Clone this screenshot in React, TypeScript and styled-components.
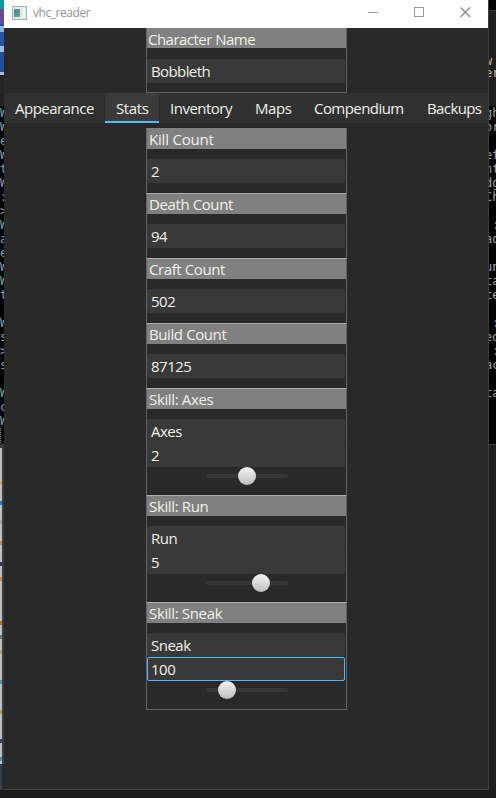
import React from "react";
import styled, { createGlobalStyle } from "styled-components";

const Global = createGlobalStyle`
  * { box-sizing: border-box; }
  html, body { margin: 0; background: #1b1b1b; overflow: hidden; }
`;

const Desktop = styled.div`
  width: 496px;
  height: 798px;
  display: grid;
  grid-template-columns: 4px 485px 7px;
  grid-template-rows: 790px 8px;
  overflow: hidden;
  font-family: "Open Sans", "Noto Sans", sans-serif;
  font-size: 15px;
  color: #f0f0ea;
`;

const Strip = styled.div`
  min-width: 0;
  overflow: hidden;
  display: flex;
  flex-direction: column;
`;

const Segment = styled.div<{ $h: number; $bg: string }>`
  flex: none;
  height: ${(p) => p.$h}px;
  background: ${(p) => p.$bg};
`;

const Terminal = styled.div<{ $h: number; $tint: string }>`
  flex: none;
  height: ${(p) => p.$h}px;
  overflow: hidden;
  background: #000;
  color: ${(p) => p.$tint};
  font: 12px/14px "DejaVu Sans Mono", monospace;
  white-space: pre;
`;

const Lines = styled.div<{ $shift: number }>`
  margin-left: ${(p) => p.$shift}px;
`;

const Editor = styled.div`
  flex: none;
  height: 96px;
  padding-top: 44px;
  overflow: hidden;
  background: #1f1f1f;
  border-top: 1px solid #353535;
  color: #c4b8a4;
  font: 12px/12px "DejaVu Sans Mono", monospace;
  white-space: pre;
`;

const Window = styled.div`
  display: flex;
  flex-direction: column;
  background: #292929;
  border-right: 1px solid #3c3c3c;
  border-bottom: 1px solid #404040;
  min-width: 0;
`;

const TitleBar = styled.div`
  height: 28px;
  flex: none;
  display: flex;
  align-items: center;
  background: #fff;
  color: #929292;
  font-size: 12px;
`;

const AppIcon = styled.svg`
  width: 15px;
  height: 14px;
  margin: 0 6px 3px 8px;
`;

const Title = styled.span`
  flex: 1;
  line-height: 20px;
  padding-bottom: 2px;
  letter-spacing: -0.45px;
`;

const WindowButton = styled.div`
  width: 46px;
  height: 28px;
  display: flex;
  justify-content: center;
  padding-top: 7px;
`;

const Panel = styled.section`
  width: 201px;
  margin-left: 142px;
  flex: none;
`;

const Group = styled.div<{ $h: number; $first?: boolean; $last?: boolean }>`
  height: ${(p) => p.$h}px;
  border: 1px solid #636363;
  border-top-color: ${(p) => (p.$first ? "#838383" : "#adadad")};
  border-bottom: ${(p) => (p.$last ? "1px solid #636363" : "0")};
`;

const GroupTitle = styled.div<{ $short?: boolean }>`
  height: ${(p) => (p.$short ? 19 : 20)}px;
  line-height: 21px;
  margin-bottom: ${(p) => (p.$short ? 11 : 10)}px;
  padding-left: ${(p) => (p.$short ? 1 : 2)}px;
  background: #808080;
`;

const Field = styled.div<{ $focus?: boolean }>`
  height: 24px;
  line-height: ${(p) => (p.$focus ? 23 : 25)}px;
  margin-right: 1px;
  padding-left: ${(p) => (p.$focus ? 3 : 4)}px;
  background: #393939;
  border-radius: 2px;
  ${(p) => p.$focus && "border: 1px solid #54b8f5;"}
`;

const Track = styled.div`
  position: relative;
  width: 82px;
  height: 4px;
  margin: 7px 0 0 59px;
  border-radius: 2px;
  background: #373737;
`;

const Thumb = styled.div<{ $at: number }>`
  position: absolute;
  top: -7px;
  left: ${(p) => p.$at - 9}px;
  width: 18px;
  height: 18px;
  border-radius: 50%;
  background: linear-gradient(#f4f4f4, #bdbdbd);
`;

const Tabs = styled.nav`
  height: 30px;
  flex: none;
  display: flex;
  background: #313131;
  margin-bottom: 5px;
`;

const Tab = styled.div<{ $w: number; $active?: boolean }>`
  flex: none;
  width: ${(p) => p.$w}px;
  padding-left: 11px;
  line-height: 30px;
  height: 30px;
  white-space: nowrap;
  background: ${(p) => (p.$active ? "#3b3b3b" : "transparent")};
  border-bottom: ${(p) => (p.$active ? "2px solid #57bbfb" : "0")};
`;

const Label = styled.span<{ $ls: number }>`
  letter-spacing: ${(p) => p.$ls}px;
`;

const tabs = [
  { name: "Appearance", w: 101, ls: -0.5 },
  { name: "Stats", w: 54, ls: -0.4 },
  { name: "Inventory", w: 85, ls: -0.5 },
  { name: "Maps", w: 59, ls: -0.4 },
  { name: "Compendium", w: 113, ls: -0.56 },
  { name: "Backups", w: 72, ls: -0.6 },
];

const counts = [
  { name: "Kill Count", value: "2", ls: -0.2 },
  { name: "Death Count", value: "94", ls: -0.4 },
  { name: "Craft Count", value: "502", ls: -0.4 },
  { name: "Build Count", value: "87125", ls: -0.4 },
];

const skills = [
  { name: "Axes", value: "2", at: 41 },
  { name: "Run", value: "5", at: 55 },
  { name: "Sneak", value: "100", at: 20.5, focus: true },
];

const leftLines = "W\nW\ne\nW\nt\nW\n:\n>\nW\na\ne\nW\nW\nt\n\nW\ns\n>\ns\n\nW\nc\nW";
const rightLines =
  "gh\nor\n\net\nnt\ndg\nCh\n\n :\nad\n\nun\nta\nte\n\n :\ned\n :\nac\n\nta";

const speckles = [
  [33, "#caa77c"], [53, "#2d7fc4"], [72, "#b8a678"], [93, "#c98f5a"],
  [114, "#3b2d50"], [129, "#c78a5c"], [173, "#b8701f"], [187, "#6d7478"],
  [202, "#b99c80"], [232, "#4a90c8"], [262, "#b39468"], [291, "#3a3e6b"],
  [309, "#4a8fc0"],
] as const;

const documentEdge = `${speckles
  .map(([y, c]) => `linear-gradient(${c}, ${c}) 0 ${y}px / 2px 4px no-repeat`)
  .join(", ")}, linear-gradient(90deg, #bfc2c3 0 2px, #3a3d3e 2px)`;

export default function App() {
  return (
    <>
      <Global />
      <Desktop>
        <Strip>
          <Segment $h={9} $bg="#0d9aa3" />
          <Segment $h={15} $bg="#684a92" />
          <Segment $h={2} $bg="#24509f" />
          <Segment $h={6} $bg="#8fb4dc" />
          <Segment $h={14} $bg="#2456a8" />
          <Segment $h={6} $bg="#9dbde0" />
          <Segment $h={20} $bg="#22509f" />
          <Segment $h={3} $bg="#b0bac8" />
          <Segment $h={31} $bg="#232426" />
          <Terminal $h={322} $tint="#8fa3b4">
            <Lines $shift={0}>{leftLines}</Lines>
          </Terminal>
          <Segment
            $h={16}
            $bg="repeating-linear-gradient(#999 0 1px, #000 1px 2px) 0 0 / 1px 100% no-repeat, #000"
          />
          <Segment $h={4} $bg="#3b3d40" />
          <Segment $h={316} $bg={documentEdge} />
          <Segment $h={26} $bg="linear-gradient(90deg, #38404a 0 2px, #26282b 2px)" />
        </Strip>
        <Window>
          <TitleBar>
            <AppIcon viewBox="0 0 15 14">
              <defs>
                <linearGradient id="pane" x1="0" y1="0" x2="1" y2="1">
                  <stop offset="0" stopColor="#4d80aa" />
                  <stop offset="1" stopColor="#68ad7c" />
                </linearGradient>
              </defs>
              <rect x=".5" y=".5" width="14" height="13" fill="#e9ecee" stroke="#a7adb4" />
              <rect x="2" y="3" width="6" height="8" fill="url(#pane)" />
              <rect x="9" y="3" width="2" height="8" fill="#dce5df" />
              <rect x="11" y="3" width="2" height="8" fill="#f8f8f8" />
            </AppIcon>
            <Title>vhc_reader</Title>
            <WindowButton>
              <svg width="10" height="11"><path d="M0 5.5H10" stroke="#999" /></svg>
            </WindowButton>
            <WindowButton>
              <svg width="10" height="11"><rect x=".5" y=".5" width="9" height="9" fill="none" stroke="#999" /></svg>
            </WindowButton>
            <WindowButton>
              <svg width="11" height="11"><path d="M.5 .5L10 10M10 .5L.5 10" stroke="#888" strokeWidth="1.2" /></svg>
            </WindowButton>
          </TitleBar>

          <Panel>
            <Group $h={65} $first $last>
              <GroupTitle $short><Label $ls={-0.52}>Character Name</Label></GroupTitle>
              <Field><Label $ls={-0.6}>Bobbleth</Label></Field>
            </Group>
          </Panel>

          <Tabs>
            {tabs.map((t, i) => (
              <Tab key={t.name} $w={t.w} $active={i === 1}>
                <Label $ls={t.ls}>{t.name}</Label>
              </Tab>
            ))}
          </Tabs>

          <Panel>
            {counts.map((c, i) => (
              <Group key={c.name} $h={65} $first={i === 0}>
                <GroupTitle><Label $ls={c.ls}>{c.name}</Label></GroupTitle>
                <Field><Label $ls={-0.5}>{c.value}</Label></Field>
              </Group>
            ))}
            {skills.map((s, i) => (
              <Group key={s.name} $h={i === 2 ? 108 : 107} $last={i === 2}>
                <GroupTitle><Label $ls={-0.35}>{`Skill: ${s.name}`}</Label></GroupTitle>
                <Field><Label $ls={-0.5}>{s.name}</Label></Field>
                <Field $focus={s.focus}><Label $ls={-0.5}>{s.value}</Label></Field>
                <Track><Thumb $at={s.at} /></Track>
              </Group>
            ))}
          </Panel>
        </Window>
        <Strip>
          <Segment $h={10} $bg="#000" />
          <Editor><Lines $shift={-4}>{"w\ner"}</Lines></Editor>
          <Terminal $h={338} $tint="#9da5a4">
            <Lines $shift={-4}>{rightLines}</Lines>
          </Terminal>
          <Segment $h={346} $bg="linear-gradient(#444 0 1px, #1d1d1d 1px)" />
        </Strip>
      </Desktop>
    </>
  );
}
